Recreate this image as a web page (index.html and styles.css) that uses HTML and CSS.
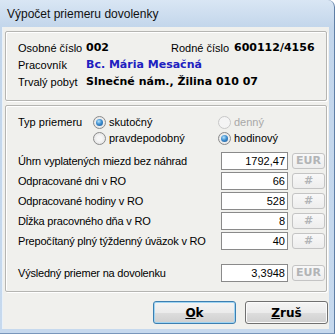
FILE: index.html
```html
<!DOCTYPE html>
<html lang="sk">
<head>
<meta charset="utf-8">
<title>Výpočet priemeru dovolenky</title>
<link rel="stylesheet" href="styles.css">
</head>
<body>
<div class="window">
  <div class="titlebar">Výpočet priemeru dovolenky</div>
  <div class="client">
    <div class="group g1">
      <div class="info">
        <span class="lbl">Osobné číslo</span><span class="val">002</span><span class="lbl">Rodné číslo</span><span class="val">600112/4156</span>
        <span class="lbl">Pracovník</span><span class="val blue wide">Bc. Mária Mesačná</span>
        <span class="lbl">Trvalý pobyt</span><span class="val wide">Slnečné nám., Žilina 010 07</span>
      </div>
    </div>
    <div class="group g2">
      <div class="typ">
        <span class="lbl">Typ priemeru</span>
        <span class="radio"><i class="rb checked"></i>skutočný</span>
        <span class="radio disabled"><i class="rb"></i>denný</span>
        <span></span>
        <span class="radio"><i class="rb"></i>pravdepodobný</span>
        <span class="radio"><i class="rb checked"></i>hodinový</span>
      </div>
      <div class="fields">
        <div class="frow"><span class="lbl">Úhrn vyplatených miezd bez náhrad</span><span class="field">1792,47</span><span class="unit">EUR</span></div>
        <div class="frow"><span class="lbl">Odpracované dni v RO</span><span class="field">66</span><span class="unit">#</span></div>
        <div class="frow"><span class="lbl">Odpracované hodiny v RO</span><span class="field">528</span><span class="unit">#</span></div>
        <div class="frow"><span class="lbl">Dĺžka pracovného dňa v RO</span><span class="field">8</span><span class="unit">#</span></div>
        <div class="frow"><span class="lbl">Prepočítaný plný týždenný úväzok v RO</span><span class="field">40</span><span class="unit">#</span></div>
      </div>
      <div class="frow result"><span class="lbl">Výsledný priemer na dovolenku</span><span class="field">3,3948</span><span class="unit">EUR</span></div>
    </div>
    <div class="buttons">
      <button class="btn default"><u>O</u>k</button>
      <button class="btn"><u>Z</u>ruš</button>
    </div>
  </div>
</div>
</body>
</html>
```
FILE: styles.css
```css
html, body {
  margin: 0;
  padding: 0;
  background: #ffffff;
}
body {
  width: 335px;
  height: 334px;
  overflow: hidden;
  font-family: "Liberation Sans", Arial, sans-serif;
  font-size: 11px;
  color: #000;
}
.window {
  box-sizing: border-box;
  width: 335px;
  height: 334px;
  padding: 0 5px 5px 2px;
  background: linear-gradient(to bottom, #d9e6f4 0px, #c3d6eb 27px, #c6d9ee 100%);
  border-right: 1px solid #5f7fa6;
  border-bottom: 1px solid #7896bb;
  border-top-right-radius: 7px;
}
.titlebar {
  height: 27px;
  line-height: 29px;
  padding-left: 5px;
  font-size: 12px;
  color: #111;
  white-space: nowrap;
}
.client {
  box-sizing: border-box;
  height: 302px;
  background: #f0f0ed;
  padding: 4px 2px 0 2px;
  border-left: 1px solid #e9f1f9;
}
.group {
  border: 1px solid #b5b5b2;
  border-radius: 2px;
  box-shadow: inset 1px 1px 0 #ffffff, 1px 1px 0 #ffffff;
  padding-left: 12px;
}
.g1 {
  padding-top: 7px;
  padding-bottom: 10px;
}
.g2 {
  margin-top: 4px;
  padding-top: 8px;
  padding-bottom: 9px;
}
.info {
  display: grid;
  grid-template-columns: 68px 85px 63px auto;
  grid-auto-rows: 17px;
  align-items: center;
}
.lbl {
  white-space: nowrap;
}
.val {
  font-family: "DejaVu Sans", Verdana, sans-serif;
  font-weight: bold;
  font-size: 11px;
  white-space: nowrap;
}
.val.wide {
  grid-column: span 3;
}
.blue {
  color: #2020c0;
}
.typ {
  display: grid;
  grid-template-columns: 75px 125px auto;
  grid-auto-rows: 16px;
  align-items: center;
}
.radio {
  display: flex;
  align-items: center;
  white-space: nowrap;
}
.rb {
  box-sizing: border-box;
  width: 13px;
  height: 13px;
  border-radius: 50%;
  border: 1px solid #8b8b8b;
  background: radial-gradient(circle at 50% 50%, #f6f6f6 30%, #dcdcdc 100%);
  margin-right: 3px;
  display: flex;
  align-items: center;
  justify-content: center;
}
.rb.checked::after {
  content: "";
  width: 7px;
  height: 7px;
  border-radius: 50%;
  background: radial-gradient(circle at 40% 35%, #b7e3fb 0%, #3f8fd0 45%, #154f8f 100%);
}
.radio.disabled {
  color: #a8a8a8;
}
.radio.disabled .rb {
  border-color: #c8c8c8;
  background: #f4f4f4;
}
.fields {
  margin-top: 6px;
  display: flex;
  flex-direction: column;
  gap: 2px;
}
.frow {
  display: grid;
  grid-template-columns: 199px 67px 33px;
  column-gap: 4px;
  align-items: center;
  height: 18px;
}
.frow .lbl {
  letter-spacing: -0.2px;
}
.result {
  margin-top: 14px;
}
.field {
  box-sizing: border-box;
  height: 18px;
  line-height: 16px;
  border: 1px solid #8a8a8a;
  background: #ffffff;
  text-align: right;
  padding-right: 2px;
}
.unit {
  box-sizing: border-box;
  height: 16px;
  line-height: 14px;
  border: 1px solid #c4c4c4;
  border-radius: 3px;
  background: linear-gradient(to bottom, #f8f8f8, #ededed);
  text-align: center;
  font-family: "DejaVu Sans", Verdana, sans-serif;
  font-weight: bold;
  font-size: 11px;
  color: #b2b4b6;
}
.buttons {
  display: flex;
  justify-content: flex-end;
  gap: 9px;
  margin-top: 9px;
  margin-right: -1px;
}
.btn {
  box-sizing: border-box;
  width: 83px;
  height: 23px;
  padding: 0;
  border: 1px solid #707070;
  border-radius: 3px;
  background: linear-gradient(to bottom, #f4f4f4 0%, #ebebeb 50%, #dddddd 51%, #cfcfcf 100%);
  box-shadow: inset 0 0 0 1px #fbfbfb;
  font-family: "DejaVu Sans", Verdana, sans-serif;
  font-weight: bold;
  font-size: 12px;
  color: #000;
}
.btn.default {
  border-color: #3c7fb1;
  box-shadow: inset 0 0 0 1px #9fd4f2;
}
.btn u {
  text-decoration: underline;
}
```
